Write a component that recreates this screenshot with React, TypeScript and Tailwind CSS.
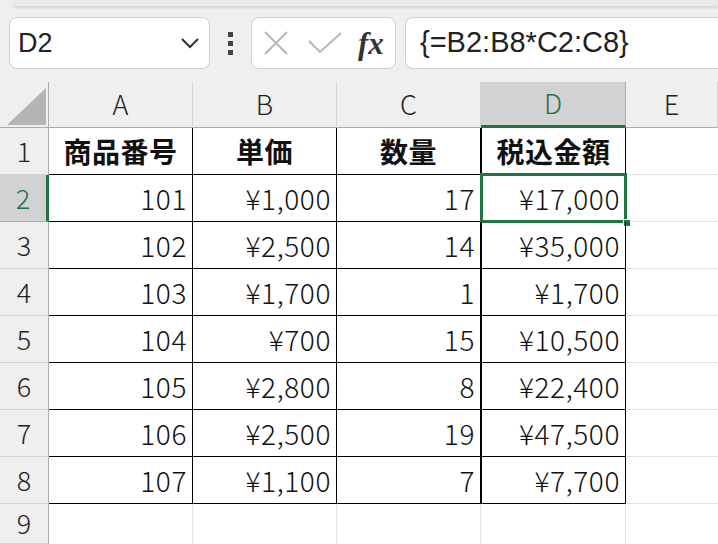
import React from "react";

const rows: [string, string, string, string][] = [
  ["101", "¥1,000", "17", "¥17,000"],
  ["102", "¥2,500", "14", "¥35,000"],
  ["103", "¥1,700", "1", "¥1,700"],
  ["104", "¥700", "15", "¥10,500"],
  ["105", "¥2,800", "8", "¥22,400"],
  ["106", "¥2,500", "19", "¥47,500"],
  ["107", "¥1,100", "7", "¥7,700"],
];

const font = { fontFamily: '"Noto Sans CJK JP", "Noto Sans", sans-serif' };
const latin = { fontFamily: '"Liberation Sans", Arial, sans-serif' };

function ColHead({ label, active }: { label: string; active?: boolean }) {
  return (
    <div
      className={
        active
          ? "flex items-center justify-center font-light bg-[#d2d2d2] border-r border-[#ababab] border-b-[3px] border-b-[#217346] text-[#217346] text-[27px]"
          : "flex items-center justify-center font-light bg-[#efefef] border-r border-[#d4d4d4] border-b border-b-[#ababab] text-[#222] text-[27px]"
      }
    >
      {label}
    </div>
  );
}

function RowHead({ label, active }: { label: string; active?: boolean }) {
  return (
    <div
      className={
        active
          ? "flex items-center justify-center font-light bg-[#d2d2d2] border-r-[3px] border-r-[#217346] border-b border-[#ababab] text-[#217346] text-[27px]"
          : "flex items-center justify-center font-light bg-[#efefef] border-r border-r-[#ababab] border-b border-[#d4d4d4] text-[#222] text-[27px]"
      }
    >
      {label}
    </div>
  );
}

export default function App() {
  return (
    <div className="w-[718px] h-[544px] overflow-hidden bg-[#efefef] text-[#111]" style={font}>
      <div className="h-[6px] bg-[#e9e9e9] ml-[14px] shadow-[0_2px_3px_rgba(0,0,0,0.12)]" />
      <div className="flex items-center h-[76px] pl-[9px] pb-[2px]">
        <div className="flex items-center justify-between w-[201px] h-[52px] bg-white border border-[#d0d0d0] rounded-[8px] pl-[8px] pr-[9px]">
          <span className="text-[27px] text-[#222]" style={latin}>D2</span>
          <svg width="20" height="12" viewBox="0 0 20 12">
            <path d="M2 2 L10 10 L18 2" fill="none" stroke="#333" strokeWidth="2" />
          </svg>
        </div>
        <div className="flex flex-col items-center justify-center gap-[4px] w-[41px]">
          <div className="w-[5px] h-[5px] bg-[#444]" />
          <div className="w-[5px] h-[5px] bg-[#444]" />
          <div className="w-[5px] h-[5px] bg-[#444]" />
        </div>
        <div className="flex items-center w-[145px] h-[52px] bg-white border border-[#d0d0d0] rounded-[8px] pl-[12px] gap-[20px]">
          <svg width="24" height="24" viewBox="0 0 24 24">
            <path d="M1 1 L23 23 M23 1 L1 23" stroke="#b5b5b5" strokeWidth="1.8" />
          </svg>
          <svg width="34" height="22" viewBox="0 0 34 22">
            <path d="M1 9 L12 20 L33 1" fill="none" stroke="#b5b5b5" strokeWidth="1.8" />
          </svg>
          <span
            className="text-[31px] italic font-bold text-[#333] leading-none -ml-[4px]"
            style={{ fontFamily: '"Liberation Serif", "DejaVu Serif", serif' }}
          >
            fx
          </span>
        </div>
        <div className="flex items-center flex-1 h-[52px] ml-[9px] bg-white border border-[#d0d0d0] border-r-0 rounded-l-[8px] pl-[14px]">
          <span className="text-[29px] text-[#222]" style={latin}>{"{=B2:B8*C2:C8}"}</span>
        </div>
      </div>

      <div className="grid grid-cols-[49px_144px_144px_144px_145px_1fr] grid-rows-[46px_repeat(8,47px)_40px] bg-white">
        <div className="relative bg-[#efefef] border-r border-r-[#ababab] border-b border-b-[#ababab]">
          <svg className="absolute left-[7px] top-[6px]" width="39" height="37" viewBox="0 0 39 37">
            <path d="M39 0 L39 37 L0 37 Z" fill="#b4b4b4" />
          </svg>
        </div>
        <ColHead label="A" />
        <ColHead label="B" />
        <ColHead label="C" />
        <ColHead label="D" active />
        <ColHead label="E" />

        <RowHead label="1" />
        {["商品番号", "単価", "数量", "税込金額"].map((h, i) => (
          <div
            key={h}
            className={
              "flex items-center justify-center font-bold text-[28px] tracking-[0.5px] border-b border-black " +
              (i === 3 ? "border-r border-r-black border-l border-l-black" : "border-r border-black")
            }
          >
            {h}
          </div>
        ))}
        <div className="border-b border-[#e1e1e1]" />

        {rows.map((r, ri) => (
          <React.Fragment key={ri}>
            <RowHead label={String(ri + 2)} active={ri === 0} />
            {r.map((v, ci) => {
              const selected = ri === 0 && ci === 3;
              return (
                <div
                  key={ci}
                  className={
                    "relative flex items-center justify-end pr-[5px] font-light text-[28px] tracking-[0.6px] border-b border-black " +
                    (ci === 3 ? "border-r border-r-black border-l border-l-black" : "border-r border-black")
                  }
                >
                  {v}
                  {selected && (
                    <>
                      <div className="absolute -left-[2px] -top-[2px] -right-[2px] -bottom-[2px] border-[3px] border-[#217346] pointer-events-none" />
                      <div className="absolute -right-[6px] -bottom-[6px] w-[8px] h-[8px] bg-[#217346] border border-white" />
                    </>
                  )}
                </div>
              );
            })}
            <div className="border-b border-[#e1e1e1]" />
          </React.Fragment>
        ))}

        <RowHead label="9" />
        <div className="border-r border-[#e1e1e1]" />
        <div className="border-r border-[#e1e1e1]" />
        <div className="border-r border-[#e1e1e1]" />
        <div className="border-r border-[#e1e1e1]" />
        <div />
      </div>
    </div>
  );
}
